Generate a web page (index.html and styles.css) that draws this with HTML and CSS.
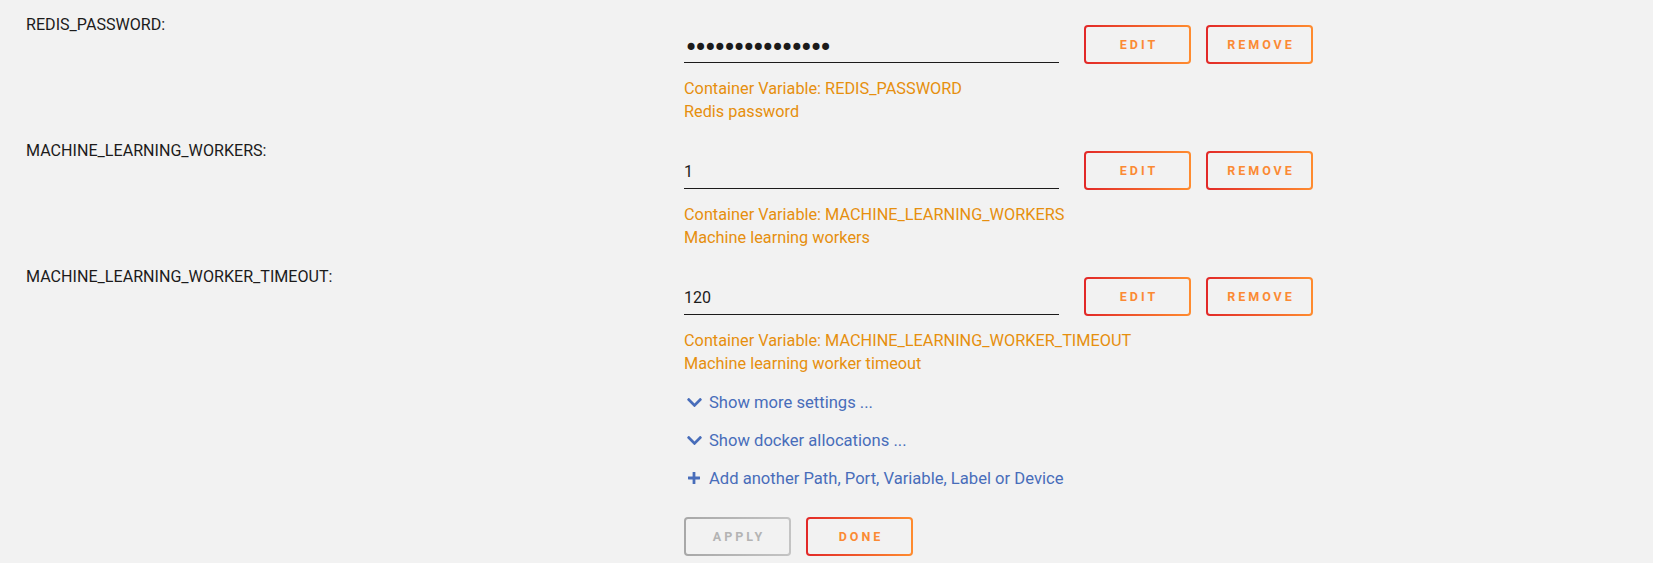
FILE: index.html
```html
<!DOCTYPE html>
<html lang="en">
<head>
<meta charset="utf-8">
<title>Template variables</title>
<link rel="stylesheet" href="styles.css">
</head>
<body>
<div class="form">
  <div class="row">
    <div class="label">REDIS_PASSWORD:</div>
    <div class="field">
      <div class="control">
        <div class="input password">•••••••••••••••</div>
        <button class="btn">Edit</button>
        <button class="btn">Remove</button>
      </div>
      <div class="help">
        <div>Container Variable: REDIS_PASSWORD</div>
        <div>Redis password</div>
      </div>
    </div>
  </div>
  <div class="row">
    <div class="label">MACHINE_LEARNING_WORKERS:</div>
    <div class="field">
      <div class="control">
        <div class="input">1</div>
        <button class="btn">Edit</button>
        <button class="btn">Remove</button>
      </div>
      <div class="help">
        <div>Container Variable: MACHINE_LEARNING_WORKERS</div>
        <div>Machine learning workers</div>
      </div>
    </div>
  </div>
  <div class="row">
    <div class="label">MACHINE_LEARNING_WORKER_TIMEOUT:</div>
    <div class="field">
      <div class="control">
        <div class="input">120</div>
        <button class="btn">Edit</button>
        <button class="btn">Remove</button>
      </div>
      <div class="help">
        <div>Container Variable: MACHINE_LEARNING_WORKER_TIMEOUT</div>
        <div>Machine learning worker timeout</div>
      </div>
    </div>
  </div>
  <div class="row extras">
    <div class="label"></div>
    <div class="field-plain">
      <a class="link"><span class="ico"><svg width="15" height="9" viewBox="0 120 448 270"><path fill="currentColor" d="M207.029 381.476L12.686 187.132c-9.373-9.373-9.373-24.569 0-33.941l22.667-22.667c9.357-9.357 24.522-9.375 33.901-.04L224 284.505l154.745-154.021c9.379-9.335 24.544-9.317 33.901.04l22.667 22.667c9.373 9.373 9.373 24.569 0 33.941L240.971 381.476c-9.373 9.372-24.569 9.372-33.942 0z"/></svg></span>Show more settings ...</a>
      <a class="link"><span class="ico"><svg width="15" height="9" viewBox="0 120 448 270"><path fill="currentColor" d="M207.029 381.476L12.686 187.132c-9.373-9.373-9.373-24.569 0-33.941l22.667-22.667c9.357-9.357 24.522-9.375 33.901-.04L224 284.505l154.745-154.021c9.379-9.335 24.544-9.317 33.901.04l22.667 22.667c9.373 9.373 9.373 24.569 0 33.941L240.971 381.476c-9.373 9.372-24.569 9.372-33.942 0z"/></svg></span>Show docker allocations ...</a>
      <a class="link"><span class="ico"><svg width="12" height="12" viewBox="16 48 416 416"><path fill="currentColor" d="M416 208H272V64c0-17.670-14.330-32-32-32h-32c-17.670 0-32 14.330-32 32v144H32c-17.670 0-32 14.330-32 32v32c0 17.670 14.330 32 32 32h144v144c0 17.670 14.330 32 32 32h32c17.670 0 32-14.330 32-32V304h144c17.670 0 32-14.330 32-32v-32c0-17.670-14.330-32-32-32z"/></svg></span>Add another Path, Port, Variable, Label or Device</a>
      <div class="actions">
        <button class="btn disabled">Apply</button>
        <button class="btn">Done</button>
      </div>
    </div>
  </div>
</div>
</body>
</html>
```

FILE: styles.css
```css
html, body {
  margin: 0;
  padding: 0;
}
body {
  background: #f2f2f2;
  color: #1c1b1b;
  font-family: Roboto, "Noto Sans", sans-serif;
  font-size: 16px;
}
.form {
  padding: 13px 0 0 26px;
}
.row {
  display: grid;
  grid-template-columns: 658px 1fr;
}
.row + .row {
  margin-top: 16px;
}
.row.extras {
  margin-top: 8px;
}
.label {
  line-height: 23px;
  font-size: 16.1px;
}
.field {
  padding-top: 12px;
}
.control {
  display: flex;
  align-items: center;
}
.input {
  width: 375px;
  height: 38px;
  box-sizing: border-box;
  padding-top: 9px;
  line-height: 23px;
  border-bottom: 1px solid #1c1b1b;
  margin-right: 25px;
  margin-bottom: 1px;
}
.input.password {
  font-family: "DejaVu Sans", sans-serif;
  font-size: 24px;
  letter-spacing: -4.55px;
  line-height: 23px;
  padding-top: 12px;
}
.btn {
  width: 107px;
  height: 39px;
  margin: 0 15px 0 0;
  padding: 0 0 0 3px;
  box-sizing: border-box;
  border: 2px solid transparent;
  border-radius: 4px;
  background: linear-gradient(#f2f2f2, #f2f2f2) padding-box,
              linear-gradient(90deg, #e22828, #ff8c2f) border-box;
  color: #fb8a34;
  font-family: Roboto, "Noto Sans", sans-serif;
  font-weight: bold;
  font-size: 12.5px;
  letter-spacing: 3px;
  text-transform: uppercase;
  cursor: pointer;
}
.btn.disabled {
  background: linear-gradient(#f2f2f2, #f2f2f2) padding-box,
              linear-gradient(90deg, #a8a8a8, #c4c4c4) border-box;
  color: #b4b4b4;
  cursor: default;
}
.help {
  margin-top: 13px;
  line-height: 23px;
  font-size: 16.3px;
  color: #e68f0e;
}
.link {
  display: flex;
  align-items: center;
  height: 38px;
  font-size: 16.6px;
  color: #486dba;
  text-decoration: none;
  cursor: pointer;
}
.ico {
  display: inline-flex;
  justify-content: center;
  align-items: center;
  width: 16px;
  margin-right: 7px;
  margin-left: 2px;
}
.actions {
  display: flex;
  margin-top: 20px;
}
```
